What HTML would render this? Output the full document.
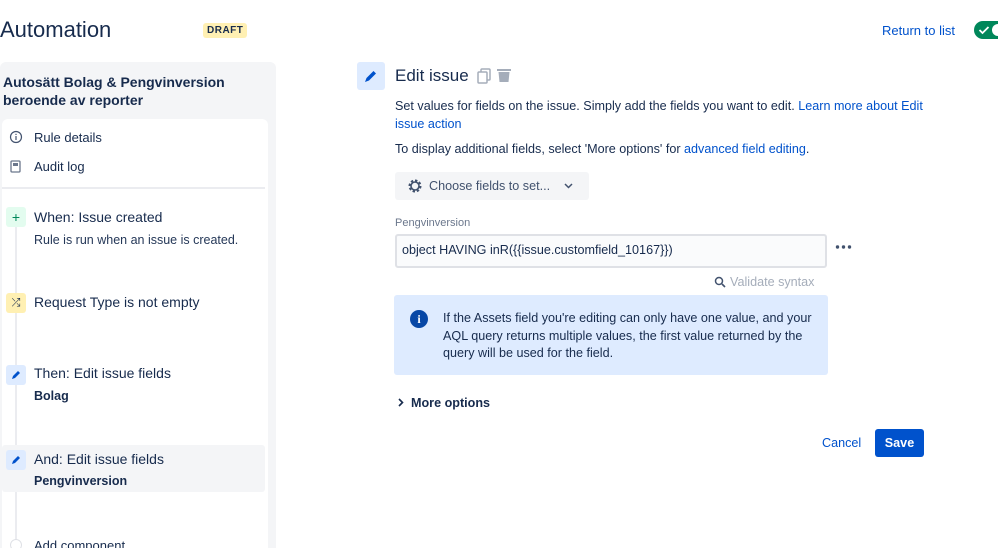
<!DOCTYPE html>
<html><head><meta charset="utf-8"><style>
*{margin:0;padding:0;box-sizing:border-box}
html,body{width:998px;height:548px;overflow:hidden}
body{background:#fff;font-family:"Liberation Sans",sans-serif;color:#172b4d;position:relative}
.a{position:absolute;white-space:nowrap}
.link{color:#0052cc}
.ic{position:absolute;width:20px;height:20px;border-radius:3px;display:flex;align-items:center;justify-content:center}
</style></head><body>
<div class="a" style="left:0;top:17px;font-size:22px;color:#172b4d">Automation</div>
<div class="a" style="left:203px;top:23px;background:#fff0b3;color:#172b4d;font-size:10px;font-weight:bold;padding:2px 4px;border-radius:3px;letter-spacing:.5px">DRAFT</div>
<div class="a link" style="left:882px;top:23px;font-size:13px">Return to list</div>
<div class="a" style="left:974px;top:21px;width:40px;height:18px;border-radius:9px;background:#00875a"></div>
<svg class="a" style="left:978px;top:25px" width="12" height="10"><path d="M1.5 5l3 3 6-6" fill="none" stroke="#fff" stroke-width="1.8"/></svg>
<div class="a" style="left:992px;top:24px;width:12px;height:12px;border-radius:6px;background:#fff"></div>

<div class="a" style="left:0;top:62px;width:276px;height:500px;background:#f4f5f7;border-radius:6px"></div>
<div class="a" style="left:3px;top:73px;font-size:14px;font-weight:bold;line-height:18px;white-space:normal;width:260px">Autosätt Bolag &amp; Pengvinversion beroende av reporter</div>
<div class="a" style="left:2px;top:119px;width:266px;height:440px;background:#fff;border-radius:6px"></div>
<svg class="a" style="left:9px;top:130px" width="14" height="14"><circle cx="7" cy="7" r="5.5" fill="none" stroke="#42526e" stroke-width="1.2"/><rect x="6.4" y="6" width="1.2" height="4" fill="#42526e"/><rect x="6.4" y="3.8" width="1.2" height="1.2" fill="#42526e"/></svg>
<div class="a" style="left:34px;top:130px;font-size:13px">Rule details</div>
<svg class="a" style="left:10px;top:160px" width="12" height="14"><rect x="1" y="1" width="9" height="11" fill="none" stroke="#6b778c" stroke-width="1.3" rx="1"/><rect x="3" y="3" width="5" height="3" fill="#6b778c"/></svg>
<div class="a" style="left:34px;top:159px;font-size:13px">Audit log</div>
<div class="a" style="left:2px;top:187px;width:263px;height:2px;background:#ebecf0"></div>
<div class="a" style="left:15px;top:226px;width:2px;height:330px;background:#ebecf0"></div>

<div class="ic" style="left:6px;top:207px;background:#e3fcef;color:#00875a;font-size:14px">+</div>
<div class="a" style="left:34px;top:209px;font-size:14px">When: Issue created</div>
<div class="a" style="left:34px;top:233px;font-size:12.5px;color:#253858">Rule is run when an issue is created.</div>

<div class="ic" style="left:6px;top:293px;background:#fff0b3;color:#172b4d;font-size:11px">⤮</div>
<div class="a" style="left:34px;top:294px;font-size:14px">Request Type is not empty</div>

<div class="ic" style="left:6px;top:365px;background:#deebff"><svg width="10" height="10"><path d="M1 9l1-3 5-5 2 2-5 5z" fill="#0052cc"/></svg></div>
<div class="a" style="left:34px;top:365px;font-size:14px">Then: Edit issue fields</div>
<div class="a" style="left:34px;top:389px;font-size:12.5px;font-weight:bold">Bolag</div>

<div class="a" style="left:2px;top:445px;width:263px;height:47px;background:#f4f5f7;border-radius:3px"></div>
<div class="ic" style="left:6px;top:450px;background:#deebff"><svg width="10" height="10"><path d="M1 9l1-3 5-5 2 2-5 5z" fill="#0052cc"/></svg></div>
<div class="a" style="left:34px;top:451px;font-size:14px">And: Edit issue fields</div>
<div class="a" style="left:34px;top:474px;font-size:12.5px;font-weight:bold">Pengvinversion</div>
<div class="a" style="left:10px;top:539px;width:12px;height:12px;border-radius:6px;border:1.5px solid #dfe1e6;background:#fff"></div>
<div class="a" style="left:34px;top:538px;font-size:13px">Add component</div>

<div class="ic" style="left:357px;top:62px;width:28px;height:28px;background:#deebff"><svg width="14" height="14"><path d="M1 13l1.5-4 7-7 2.5 2.5-7 7z" fill="#0052cc"/></svg></div>
<div class="a" style="left:395px;top:66px;font-size:17px">Edit issue</div>
<svg class="a" style="left:477px;top:68px" width="14" height="16"><rect x="4" y="1" width="9" height="11" fill="none" stroke="#a5adba" stroke-width="1.5" rx="1"/><rect x="1" y="4" width="9" height="11" fill="#fff" stroke="#a5adba" stroke-width="1.5" rx="1"/></svg>
<svg class="a" style="left:497px;top:68px" width="14" height="15"><rect x="0" y="1" width="14" height="2" fill="#a5adba"/><path d="M1.5 4h11l-1 10h-9z" fill="#a5adba"/></svg>
<div class="a" style="left:395px;top:97px;font-size:12.6px;line-height:18px;white-space:normal;width:540px">Set values for fields on the issue. Simply add the fields you want to edit. <span class="link">Learn more about Edit issue action</span></div>
<div class="a" style="left:395px;top:142px;font-size:12.6px">To display additional fields, select 'More options' for <span class="link">advanced field editing</span>.</div>
<div class="a" style="left:395px;top:172px;width:194px;height:28px;background:#f4f5f7;border-radius:3px"></div>
<svg class="a" style="left:407px;top:178px" width="16" height="16" viewBox="0 0 16 16"><circle cx="8" cy="8" r="5" fill="none" stroke="#42526e" stroke-width="3" stroke-dasharray="2.2 1.7"/><circle cx="8" cy="8" r="4" fill="none" stroke="#42526e" stroke-width="1.6"/></svg>
<div class="a" style="left:429px;top:179px;font-size:12.6px;color:#42526e">Choose fields to set...</div>
<svg class="a" style="left:564px;top:183px" width="9" height="6"><path d="M1 1l3.5 3.5L8 1" fill="none" stroke="#42526e" stroke-width="1.5"/></svg>
<div class="a" style="left:395px;top:217px;font-size:11px;color:#6b778c">Pengvinversion</div>
<div class="a" style="left:395px;top:234px;width:432px;height:34px;background:#fafbfc;border:2px solid #dfe1e6;border-radius:3px"></div>
<div class="a" style="left:402px;top:243px;font-size:12.6px">object HAVING inR({{issue.customfield_10167}})</div>
<svg class="a" style="left:835px;top:244px" width="18" height="6"><circle cx="2.5" cy="3" r="1.7" fill="#42526e"/><circle cx="8.5" cy="3" r="1.7" fill="#42526e"/><circle cx="14.5" cy="3" r="1.7" fill="#42526e"/></svg>
<svg class="a" style="left:714px;top:276px" width="12" height="12"><circle cx="5" cy="5" r="3.5" fill="none" stroke="#42526e" stroke-width="1.5"/><path d="M8 8l3 3" stroke="#42526e" stroke-width="1.6"/></svg>
<div class="a" style="left:730px;top:275px;font-size:12.6px;color:#a5adba">Validate syntax</div>
<div class="a" style="left:394px;top:295px;width:434px;height:80px;background:#deebff;border-radius:3px"></div>
<div class="a" style="left:410px;top:310px;width:18px;height:18px;border-radius:9px;background:#0747a6;color:#fff;font-size:12px;font-weight:bold;text-align:center;line-height:18px;font-family:'Liberation Serif',serif">i</div>
<div class="a" style="left:443px;top:310px;font-size:12.6px;line-height:17.5px;white-space:normal;width:380px">If the Assets field you're editing can only have one value, and your AQL query returns multiple values, the first value returned by the query will be used for the field.</div>
<svg class="a" style="left:398px;top:398px" width="6" height="9"><path d="M1 1l3.5 3.5L1 8" fill="none" stroke="#172b4d" stroke-width="1.6"/></svg>
<div class="a" style="left:411px;top:396px;font-size:12.6px;font-weight:bold">More options</div>
<div class="a link" style="left:822px;top:436px;font-size:12.6px">Cancel</div>
<div class="a" style="left:875px;top:429px;width:49px;height:28px;background:#0052cc;border-radius:3px;color:#fff;font-size:12.6px;font-weight:bold;text-align:center;line-height:28px">Save</div>
</body></html>
